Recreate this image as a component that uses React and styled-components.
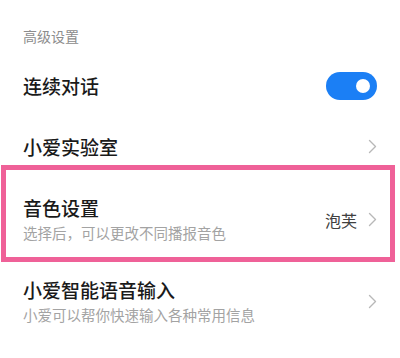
import React from "react";
import styled, { createGlobalStyle } from "styled-components";

const Global = createGlobalStyle`
  html, body { margin: 0; padding: 0; background: #ffffff; }
  body { font-family: "Noto Sans CJK SC", "Noto Sans", sans-serif; }
`;

const Page = styled.div`
  width: 400px;
  height: 358px;
  background: #ffffff;
  overflow: hidden;
`;

const SectionHeader = styled.div`
  height: 55px;
  box-sizing: border-box;
  padding: 26px 0 0 23px;
  font-size: 14px;
  line-height: 20px;
  color: #8c8c8c;
`;

const Row = styled.div`
  position: relative;
  display: flex;
  align-items: center;
  justify-content: space-between;
  box-sizing: border-box;
  height: ${(p) => p.$h}px;
  padding: 0 23px;
`;

const TextCol = styled.div`
  display: flex;
  flex-direction: column;
  gap: 2px;
`;

const Title = styled.div`
  font-size: 19px;
  line-height: 24px;
  font-weight: 500;
  color: #1a1a1a;
`;

const Sub = styled.div`
  font-size: 14.5px;
  line-height: 22px;
  color: #a3a3a3;
`;

const Right = styled.div`
  display: flex;
  align-items: center;
  gap: 11px;
`;

const Value = styled.span`
  font-size: 16px;
  line-height: 22px;
  color: #404040;
`;

const Toggle = styled.div`
  position: relative;
  width: 51px;
  height: 28px;
  border-radius: 14px;
  background: #1b7ff5;
  &::after {
    content: "";
    position: absolute;
    right: 7px;
    top: 7px;
    width: 14px;
    height: 14px;
    border-radius: 50%;
    background: #ffffff;
  }
`;

const Frame = styled.div`
  position: absolute;
  left: 1px;
  top: -12px;
  width: 394px;
  height: 97px;
  box-sizing: border-box;
  border: 5px solid #ef6198;
  pointer-events: none;
`;

const Chevron = () => (
  <svg width="9" height="15" viewBox="0 0 9 15" style={{ display: "block" }}>
    <polyline points="1.5,1.5 7.5,7.5 1.5,13.5" fill="none" stroke="#b8b8b8" strokeWidth="1.4" strokeLinecap="round" strokeLinejoin="round" />
  </svg>
);

export default function App() {
  return (
    <Page>
      <Global />
      <SectionHeader>高级设置</SectionHeader>
      <Row $h={61}>
        <Title>连续对话</Title>
        <Toggle />
      </Row>
      <Row $h={61}>
        <Title>小爱实验室</Title>
        <Chevron />
      </Row>
      <Row $h={85}>
        <TextCol>
          <Title>音色设置</Title>
          <Sub>选择后，可以更改不同播报音色</Sub>
        </TextCol>
        <Right>
          <Value>泡芙</Value>
          <Chevron />
        </Right>
        <Frame />
      </Row>
      <Row $h={79}>
        <TextCol>
          <Title>小爱智能语音输入</Title>
          <Sub>小爱可以帮你快速输入各种常用信息</Sub>
        </TextCol>
        <Chevron />
      </Row>
    </Page>
  );
}
